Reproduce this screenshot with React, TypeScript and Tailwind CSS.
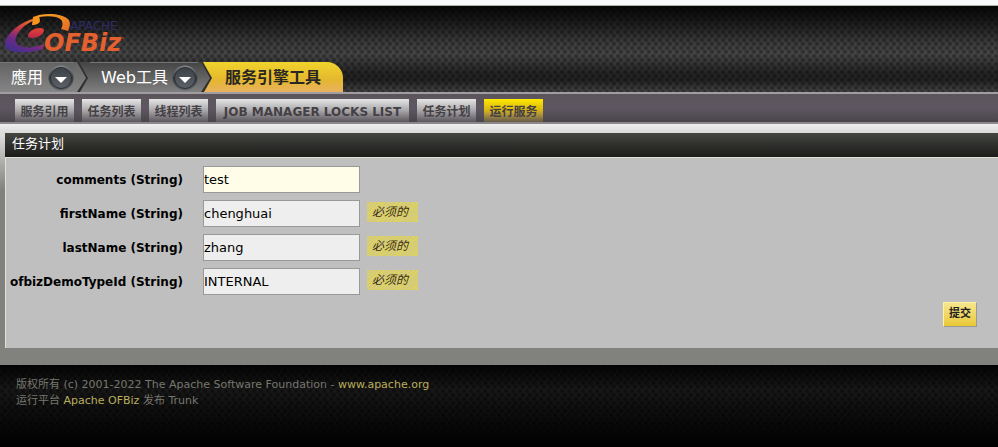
import { useState, type ReactNode } from "react";

const fontStack = "font-['DejaVu_Sans','Noto_Sans_CJK_SC',sans-serif]";
const mesh =
  "bg-[radial-gradient(circle_at_2px_2px,#0005_1px,#0000_3px),radial-gradient(circle_at_5px_6px,#0005_1px,#0000_3px),linear-gradient(to_bottom,#050605_0px,#181818_14px,#3e3e3e_38px,#464646_48px,#262626_66px,#222_74px,#444_86px)] bg-[size:7px_8px,7px_8px,100%_100%]";

function Logo() {
  return (
    <svg width="130" height="56" viewBox="0 6 130 56" role="img" aria-label="Apache OFBiz">
      <defs>
        <linearGradient id="swoosh" x1="0.3" y1="1" x2="0.8" y2="0">
          <stop offset="0" stopColor="#43308c" />
          <stop offset="0.3" stopColor="#6d2a86" />
          <stop offset="0.6" stopColor="#c83a48" />
          <stop offset="1" stopColor="#f07a2a" />
        </linearGradient>
        <linearGradient id="cap" x1="0" y1="0" x2="1" y2="1">
          <stop offset="0" stopColor="#f8a622" />
          <stop offset="1" stopColor="#e36a28" />
        </linearGradient>
        <linearGradient id="core" x1="0" y1="1" x2="1" y2="0">
          <stop offset="0" stopColor="#b3204f" />
          <stop offset="1" stopColor="#ee4a2d" />
        </linearGradient>
      </defs>
      <path d="M33 19C17 23 4 37 5 46C7 54 30 54 43 49L44 44C34 48 22 49 17 44C12 38 21 26 33 21Z" fill="url(#swoosh)" />
      <path d="M33 17L39 15L40 21C39 24 36 25 32 25Z" fill="#f7941e" />
      <path d="M39 15C50 13 62 14 68 19C71 22 70 27 68 31L61 29C64 24 63 19 56 17C51 16 45 16 39 17Z" fill="url(#cap)" />
      <ellipse cx="36" cy="33" rx="8.5" ry="4.2" transform="rotate(-22 36 33)" fill="url(#core)" />
      <text x="70" y="30" fontSize="12" fill="#2e2b67" className="font-['DejaVu_Sans',sans-serif]">APACHE</text>
      <text x="44" y="51" fontSize="24" fontWeight="700" fontStyle="italic" fill="#e4602e" className="font-['DejaVu_Sans',sans-serif]">OFBiz</text>
      <circle cx="123" cy="38" r="1" fill="#8d4227" />
    </svg>
  );
}

function Arrow() {
  return (
    <svg width="26" height="26" viewBox="0 0 26 26" aria-hidden="true">
      <defs>
        <linearGradient id="ring" x1="0" y1="0" x2="0" y2="1">
          <stop offset="0" stopColor="#84878a" />
          <stop offset="0.5" stopColor="#363a40" />
          <stop offset="1" stopColor="#62666a" />
        </linearGradient>
        <linearGradient id="disc" x1="0" y1="0" x2="0" y2="1">
          <stop offset="0" stopColor="#3c4147" />
          <stop offset="1" stopColor="#5d6268" />
        </linearGradient>
      </defs>
      <circle cx="13" cy="13" r="12.5" fill="url(#ring)" />
      <circle cx="13" cy="13" r="10.5" fill="url(#disc)" stroke="#2b2f35" />
      <path d="M7 12H19L13 18Z" fill="#fff" />
    </svg>
  );
}

function Chevron({ id, from, to }: { id: string; from: string; to: string }) {
  return (
    <svg width="14" height="30" viewBox="0 0 14 30" aria-hidden="true">
      <defs>
        <linearGradient id={id} x1="0" y1="0" x2="0" y2="1">
          <stop offset="0" stopColor={from} />
          <stop offset="1" stopColor={to} />
        </linearGradient>
      </defs>
      <path d="M0 0H3L12 16L4 30H0Z" fill="#303030" />
      <path d="M0 0H1L10 16L1 30H0Z" fill={`url(#${id})`} />
    </svg>
  );
}

const subTabs = ["服务引用", "任务列表", "线程列表", "JOB MANAGER LOCKS LIST", "任务计划", "运行服务"];

function SubTab({ label, active }: { label: string; active: boolean }) {
  const wide = label.length > 4;
  return (
    <a
      href="#"
      className={`flex h-[23px] items-center justify-center pt-[2px] text-xs font-bold whitespace-nowrap text-[#444044] ${
        wide ? "w-[193px]" : "w-[59px]"
      } ${
        active
          ? "bg-linear-to-b from-[#ffea00] via-[#d8b410] to-[#655a48]"
          : "bg-linear-to-b from-[#e6e6e6] via-[#a9a7aa] to-[#5b575d]"
      }`}
    >
      {label}
    </a>
  );
}

type FieldProps = { name: string; initial: string; required?: boolean };

function Field({ name, initial, required = false }: FieldProps) {
  const [value, setValue] = useState(initial);
  return (
    <div className="flex h-[27px] items-center">
      <label htmlFor={name} className="w-[177px] text-right text-xs font-bold whitespace-nowrap">
        {name} (String)
      </label>
      <input
        id={name}
        value={value}
        onChange={(e) => setValue(e.target.value)}
        className={`ml-5 h-[27px] w-[157px] border border-[#999] text-[13px] outline-none ${
          required ? "bg-[#eee]" : "bg-[#fffde8]"
        }`}
      />
      {required && (
        <span className="mb-[3px] ml-[7px] flex h-5 w-[51px] items-center bg-[#d3ca80] bg-[repeating-linear-gradient(135deg,#e8dc3899_0px,#e8dc3899_1px,#0000_1px,#0000_3px)] pl-[5px] text-xs text-[#3a2c14] italic">
          必须的
        </span>
      )}
    </div>
  );
}

function FooterLink({ children }: { children: ReactNode }) {
  return (
    <a href="#" className="text-[#bcae5c]">
      {children}
    </a>
  );
}

export default function App() {
  return (
    <div className={`flex min-h-screen flex-col bg-[#81817e] text-black ${fontStack}`}>
      <div className="h-[6px] border-b border-[#a9b3ab] bg-[#f9f9fc]" />
      <header className={`flex flex-col ${mesh}`}>
        <div className="flex h-14">
          <Logo />
        </div>
        <nav className="flex h-[30px] text-base text-white">
          <button className="flex items-center gap-[5px] border-t border-[#757575] bg-linear-to-b from-[#646464] to-[#858585] pl-[11px]">
            應用
            <Arrow />
          </button>
          <div className="flex bg-linear-to-b from-[#444] to-[#808080]">
            <span className="w-[2px] bg-linear-to-b from-[#646464] to-[#858585]" />
            <Chevron id="chevron-apps" from="#646464" to="#858585" />
            <button className="flex items-center gap-1 border-t border-[#757575] pl-[11px]">
              Web工具
              <Arrow />
            </button>
          </div>
          <div className="flex overflow-hidden rounded-tr-[16px] bg-linear-to-b from-[#f0d42c] via-[#e5b72d] via-60% to-[#e8b15c]">
            <span className="w-[2px] bg-linear-to-b from-[#444] to-[#808080]" />
            <Chevron id="chevron-web" from="#444444" to="#808080" />
            <a href="#" className="flex items-center pt-[2px] pr-[22px] pl-[11px] font-bold text-[#292722]">
              服务引擎工具
            </a>
          </div>
        </nav>
      </header>
      <nav className="flex h-8 gap-2 border-t-2 border-b-2 border-t-[#a09ca1] border-b-[#8b888c] bg-linear-to-b from-[#5b5459] via-[#5e5762] to-[#49454a] px-[15px] pt-[5px]">
        {subTabs.map((t, i) => (
          <SubTab key={t} label={t} active={i === subTabs.length - 1} />
        ))}
      </nav>
      <main className="bg-linear-to-b from-[#efefef] to-[#81817e] to-[66px] pb-[17px]">
        <div className="h-[9px] bg-linear-to-b from-[#efefef] to-[#dadada]" />
        <div className="pl-[5px]">
          <h1 className="flex h-6 items-center bg-linear-to-b from-[#444641] to-[#1c1c1a] pb-[3px] pl-[7px] text-[13px] text-white">
            任务计划
          </h1>
          <form
            className="flex flex-col gap-[7px] border-t border-l border-[#e2e2d4] bg-[#bfbfbf] pt-2 pb-[21px]"
            onSubmit={(e) => e.preventDefault()}
          >
            <Field name="comments" initial="test" />
            <Field name="firstName" initial="chenghuai" required />
            <Field name="lastName" initial="zhang" required />
            <Field name="ofbizDemoTypeId" initial="INTERNAL" required />
            <button className="mr-[21px] h-[25px] w-[34px] self-end border border-t-[#fff3a0] border-r-[#999] border-b-[#999] border-l-[#fff3a0] bg-linear-to-b from-[#f6e68c] to-[#eac82f] text-[11px] font-bold text-[#222]">
              提交
            </button>
          </form>
        </div>
      </main>
      <footer className="grow bg-[radial-gradient(circle_at_2px_2px,#0006_1px,#0000_3px),radial-gradient(circle_at_5px_6px,#0006_1px,#0000_3px),linear-gradient(to_bottom,#040404,#181818_30%,#080808_75%,#000)] bg-[size:7px_8px,7px_8px,100%_100%] px-4 pt-3 text-[11px] leading-4 text-[#77776f]">
        <p>
          版权所有 (c) 2001-2022 The Apache Software Foundation - <FooterLink>www.apache.org</FooterLink>
        </p>
        <p>
          运行平台 <FooterLink>Apache OFBiz</FooterLink> 发布 Trunk
        </p>
      </footer>
    </div>
  );
}
